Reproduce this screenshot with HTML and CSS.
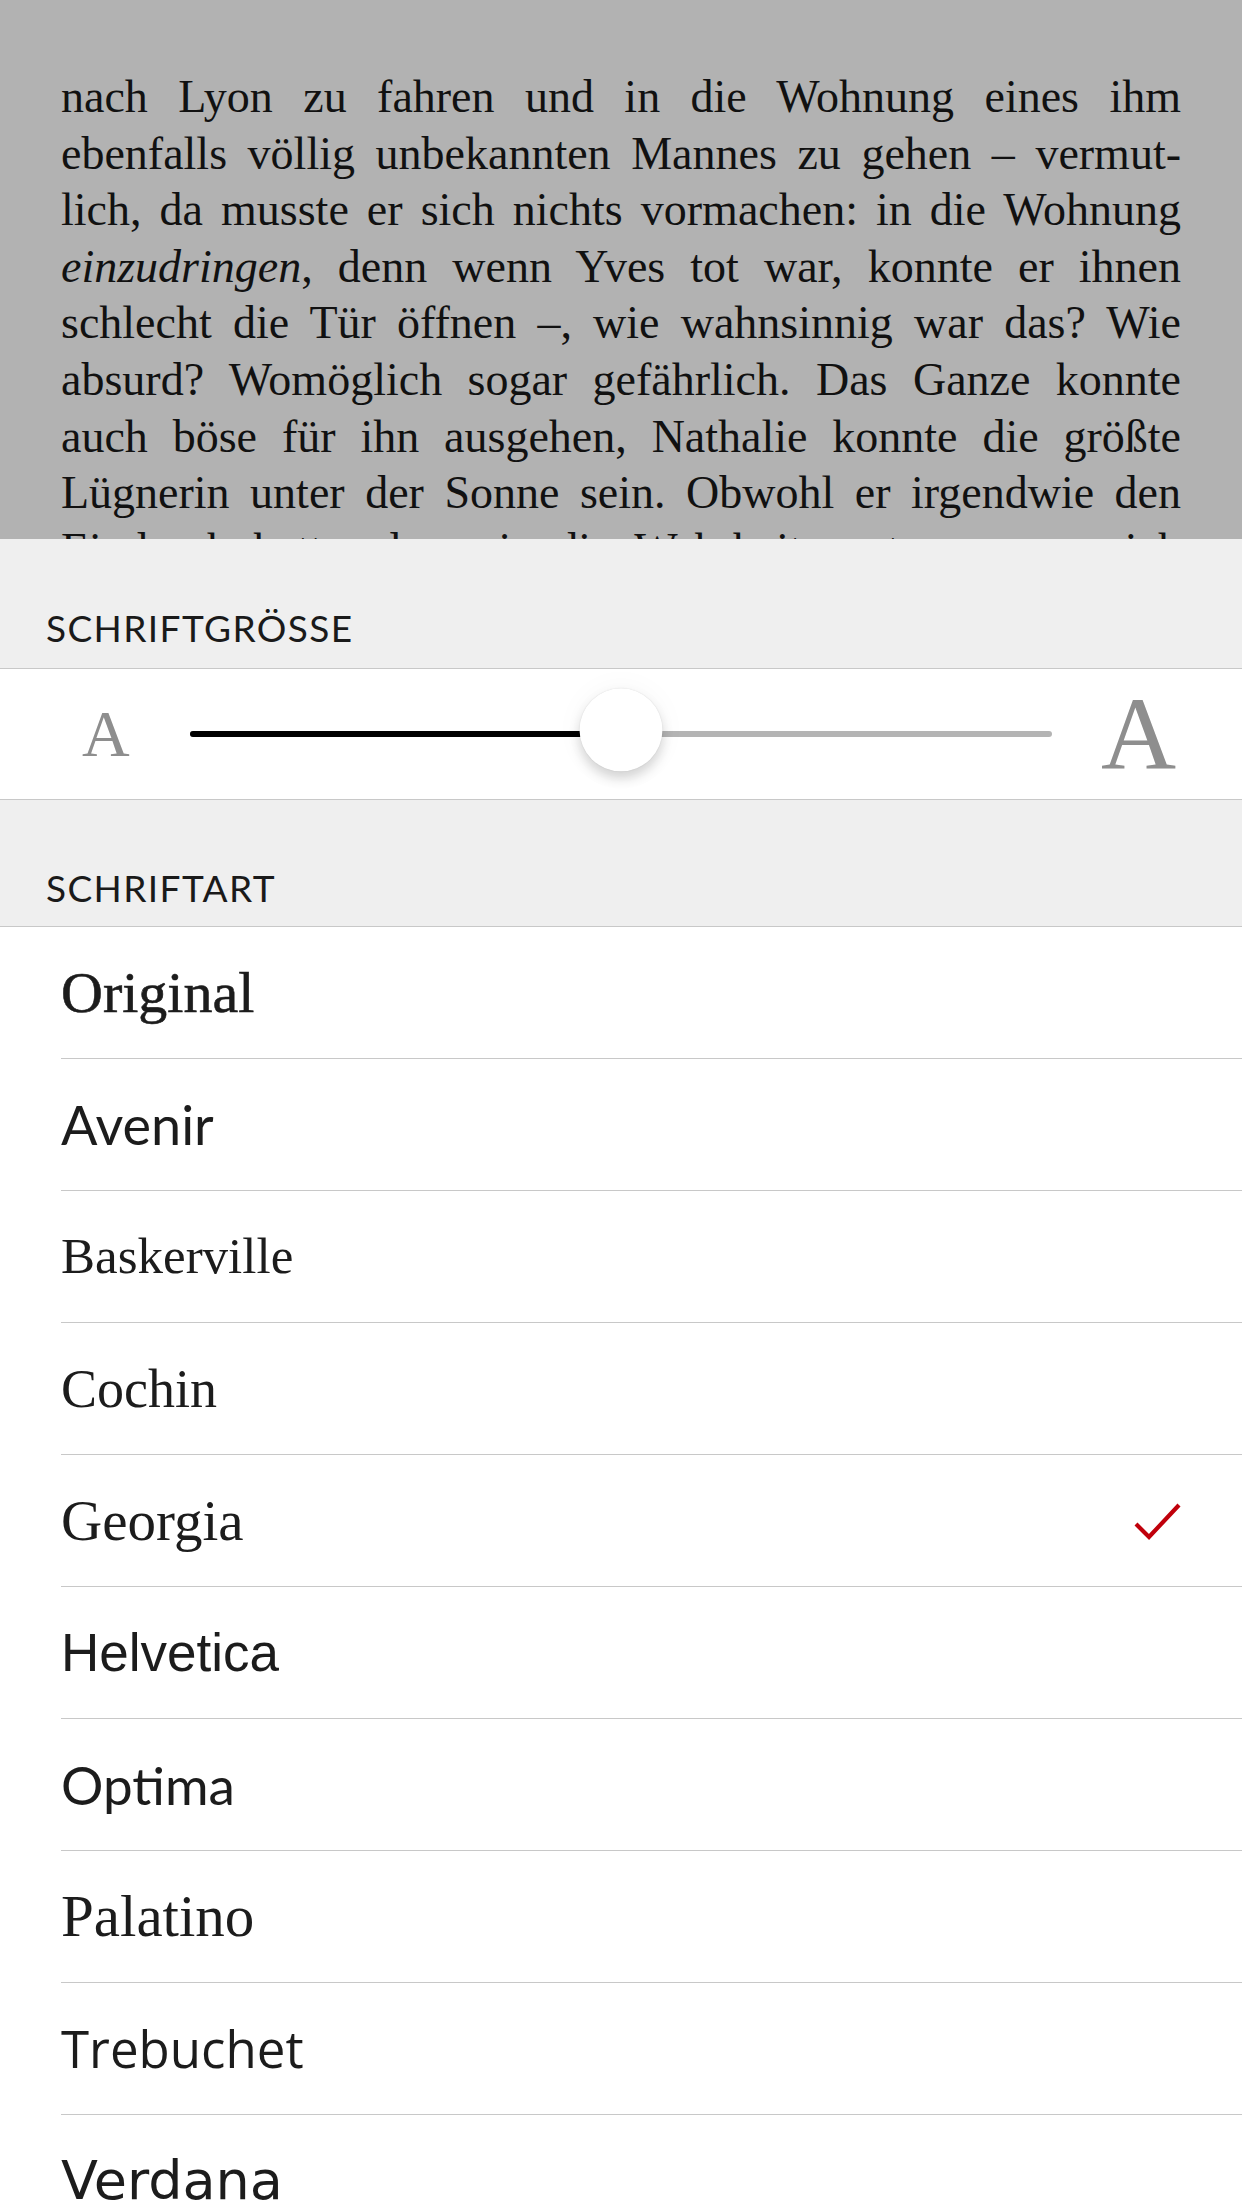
FILE: index.html
```html
<!DOCTYPE html>
<html lang="de">
<head>
<meta charset="UTF-8">
<meta name="viewport" content="width=device-width, initial-scale=1.0">
<title>Schrift</title>
<link rel="stylesheet" href="styles.css">
</head>
<body>
    <div class="screen">
        <!-- Buchseite hinter dem Panel -->
        <section class="reader">
            <div class="line">nach Lyon zu fahren und in die Wohnung eines ihm</div>
            <div class="line">ebenfalls völlig unbekannten Mannes zu gehen – vermut-</div>
            <div class="line">lich, da musste er sich nichts vormachen: in die Wohnung</div>
            <div class="line"><em>einzudringen</em>, denn wenn Yves tot war, konnte er ihnen</div>
            <div class="line">schlecht die Tür öffnen –, wie wahnsinnig war das? Wie</div>
            <div class="line">absurd? Womöglich sogar gefährlich. Das Ganze konnte</div>
            <div class="line">auch böse für ihn ausgehen, Nathalie konnte die größte</div>
            <div class="line">Lügnerin unter der Sonne sein. Obwohl er irgendwie den</div>
            <div class="line">Eindruck hatte, dass sie die Wahrheit sagte, war er sich</div>
        </section>

        <section class="settings">
            <div class="group-label">SCHRIFTGRÖSSE</div>

            <div class="size-row">
                <span class="size-a small">A</span>
                <div class="track">
                    <div class="track-fill" style="width: 50%;"></div>
                    <div class="thumb" style="left: 50%;"></div>
                </div>
                <span class="size-a big">A</span>
            </div>

            <div class="group-label second">SCHRIFTART</div>

            <ul class="font-list">
                <li class="f-original">Original</li>
                <li class="f-avenir">Avenir</li>
                <li class="f-baskerville">Baskerville</li>
                <li class="f-cochin">Cochin</li>
                <li class="f-georgia selected">
                    Georgia
                    <svg class="check" width="52" height="42" viewBox="0 0 52 42">
                        <polyline points="4,24 17,37 47,5" fill="none" stroke="#c0000b" stroke-width="4.2"/>
                    </svg>
                </li>
                <li class="f-helvetica">Helvetica</li>
                <li class="f-optima">Optima</li>
                <li class="f-palatino">Palatino</li>
                <li class="f-trebuchet">Trebuchet</li>
                <li class="f-verdana">Verdana</li>
            </ul>
        </section>
    </div>
</body>
</html>
```

FILE: styles.css
```css
html, body {
    margin: 0;
    padding: 0;
    overflow: hidden;
}

body {
    background-color: #efefef;
    font-family: 'Liberation Serif', serif;
}

.screen {
    width: 1242px;
    height: 2208px;
    overflow: hidden;
}

/* Buchtext im Hintergrund */
.reader {
    height: 539px;
    box-sizing: border-box;
    padding: 69px 61px 0 61px;
    background-color: #b2b2b2;
    color: #111;
    overflow: hidden;
    font-family: 'Liberation Serif', serif;
    font-size: 46px;
    line-height: 56.6px;
}

.reader .line {
    white-space: nowrap;
    text-align: justify;
    text-align-last: justify;
}

/* Panel */
.settings {
    background-color: #efefef;
}

.group-label {
    height: 130px;
    box-sizing: border-box;
    display: flex;
    align-items: flex-end;
    padding: 0 0 22px 46px;
    border-bottom: 1px solid #c8c8c8;
    font-family: Lato, 'Open Sans', sans-serif;
    font-size: 37px;
    line-height: 1;
    letter-spacing: 1.4px;
    color: #1a1a1a;
}

.group-label.second {
    height: 127px;
    padding-bottom: 20px;
}

.size-row {
    height: 131px;
    box-sizing: border-box;
    display: flex;
    align-items: center;
    padding: 0 66px 0 82px;
    background-color: #fff;
    border-bottom: 1px solid #c8c8c8;
}

.size-a {
    font-family: 'Liberation Serif', serif;
    color: #8e8e8e;
    line-height: 1;
}

.size-a.small {
    font-size: 66px;
    margin-right: 60px;
}

.size-a.big {
    font-size: 104px;
    margin-left: 49px;
}

.track {
    flex: 1;
    position: relative;
    height: 6px;
    border-radius: 3px;
    background-color: #b4b4b4;
}

.track-fill {
    height: 100%;
    border-radius: 3px;
    background-color: #000;
}

.thumb {
    position: absolute;
    top: 50%;
    width: 83px;
    height: 83px;
    border-radius: 50%;
    background-color: #fff;
    transform: translate(-50%, -55%);
    box-shadow: 0 0 1px rgba(0, 0, 0, 0.15), 0 7px 12px rgba(0, 0, 0, 0.16), 0 0 30px rgba(0, 0, 0, 0.04);
}

/* Liste der Schriftarten */
.font-list {
    list-style: none;
    margin: 0;
    padding: 0;
    background-color: #fff;
}

.font-list li {
    height: 132px;
    box-sizing: border-box;
    margin-left: 61px;
    padding-right: 58px;
    display: flex;
    align-items: center;
    border-bottom: 1px solid #c8c8c8;
    color: #1c1c1c;
    line-height: 1;
}

.font-list .check {
    margin-left: auto;
}

.f-original {
    font-family: 'Liberation Serif', serif;
    font-size: 58px;
    -webkit-text-stroke: 0.6px #1c1c1c;
}

.f-avenir {
    font-family: Lato, sans-serif;
    font-size: 54px;
}

.f-baskerville {
    font-family: 'Liberation Serif', serif;
    font-size: 51px;
}

.f-cochin {
    font-family: 'Liberation Serif', serif;
    font-size: 54px;
}

.f-georgia {
    font-family: 'Liberation Serif', serif;
    font-size: 57px;
}

.f-helvetica {
    font-family: 'Liberation Sans', Arial, sans-serif;
    font-size: 53px;
}

.f-optima {
    font-family: Lato, sans-serif;
    font-size: 53px;
}

.f-palatino {
    font-family: 'Liberation Serif', serif;
    font-size: 59px;
}

.f-trebuchet {
    font-family: 'Open Sans', sans-serif;
    font-weight: 500;
    font-size: 51px;
}

.f-verdana {
    font-family: 'DejaVu Sans', Verdana, sans-serif;
    font-size: 54px;
}
```
